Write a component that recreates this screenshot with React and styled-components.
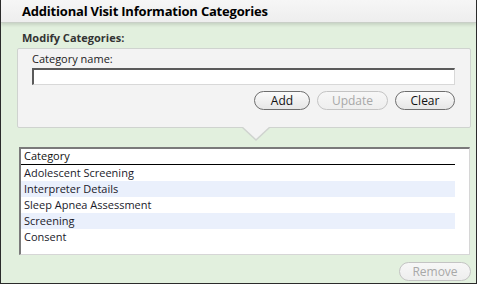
import React from "react";
import styled, { createGlobalStyle } from "styled-components";

const GlobalStyle = createGlobalStyle`
  html, body {
    margin: 0;
    padding: 0;
    background: #ffffff;
  }
  body {
    font-family: "Open Sans", "Noto Sans", Arial, sans-serif;
    color: #111;
  }
`;

const Window = styled.div`
  width: 477px;
  height: 284px;
  box-sizing: border-box;
  border-left: 1px solid #2b2b2b;
  border-right: 1px solid #2b2b2b;
  border-bottom: 1px solid #2b2b2b;
  background: #e2f0de;
  display: flex;
  flex-direction: column;
  overflow: hidden;
`;

const TitleBar = styled.div`
  height: 22px;
  flex: none;
  background: linear-gradient(#f6f6f6, #eeeeee);
  border-bottom: 1px solid #c9cfc7;
  box-shadow: 0 2px 3px rgba(0, 0, 0, 0.12);
  padding-left: 21px;
  display: flex;
  align-items: center;
  font-size: 13px;
  font-weight: 700;
  letter-spacing: -0.2px;
  color: #000;
`;

const Body = styled.div`
  flex: 1;
  display: flex;
  flex-direction: column;
  padding: 7px 5px 0 16px;
`;

const SectionLabel = styled.div`
  font-size: 11px;
  font-weight: 700;
  color: #333;
  padding-left: 5px;
  height: 16px;
  line-height: 16px;
`;

const EditPanel = styled.div`
  position: relative;
  margin-top: 2px;
  height: 80px;
  box-sizing: border-box;
  background: #f3f3f3;
  border: 1px solid #cfd3cf;
  border-radius: 2px;
  padding: 2px 15px 0 14px;
  display: flex;
  flex-direction: column;
`;

const Pointer = styled.div`
  position: absolute;
  left: 223px;
  bottom: -14px;
  width: 0;
  height: 0;
  border-left: 15px solid transparent;
  border-right: 15px solid transparent;
  border-top: 14px solid #cfd3cf;

  &::after {
    content: "";
    position: absolute;
    left: -14px;
    top: -15px;
    border-left: 14px solid transparent;
    border-right: 14px solid transparent;
    border-top: 13px solid #f3f3f3;
  }
`;

const FieldLabel = styled.div`
  font-size: 11px;
  color: #222;
  height: 16px;
  line-height: 16px;
`;

const TextInput = styled.input`
  margin-top: 1px;
  height: 17px;
  box-sizing: border-box;
  border: 1px solid #d8d8d8;
  border-top: 2px solid #5a5a5a;
  border-left: 2px solid #5a5a5a;
  background: #fff;
  outline: none;
  padding: 0 3px;
  font-family: inherit;
  font-size: 11px;
`;

const ButtonRow = styled.div`
  display: flex;
  justify-content: flex-end;
  gap: 7px;
  margin-top: 6px;
`;

const PillButton = styled.button`
  width: ${(p) => p.$w}px;
  height: 19px;
  box-sizing: border-box;
  border-radius: 10px;
  border: 1px solid ${(p) => (p.disabled ? "#c4c4c4" : "#6e6e6e")};
  background: ${(p) =>
    p.disabled
      ? "linear-gradient(#f7f7f7, #eeeeee)"
      : "linear-gradient(#fbfbfb, #e6e6e6)"};
  color: ${(p) => (p.disabled ? "#a8a8a8" : "#111")};
  font-family: inherit;
  font-size: 12px;
  line-height: 16px;
  padding: 0;
  cursor: default;
`;

const ListBox = styled.div`
  margin-top: 19px;
  margin-left: 2px;
  margin-right: 1px;
  height: 108px;
  box-sizing: border-box;
  background: #fff;
  border: 1px solid #d6d6d6;
  border-top: 2px solid #7a7a7a;
  border-left: 2px solid #7a7a7a;
  padding-right: 14px;
`;

const HeaderCell = styled.div`
  height: 15px;
  line-height: 14px;
  padding-left: 3px;
  border-bottom: 1px solid #000;
  font-size: 11px;
  color: #111;
`;

const Row = styled.div`
  height: 16px;
  line-height: 16px;
  padding-left: 3px;
  font-size: 11px;
  color: #1a1a2a;
  background: ${(p) => (p.$alt ? "#eaf0fc" : "#fff")};
`;

const Footer = styled.div`
  display: flex;
  justify-content: flex-end;
  margin-top: 7px;
`;

const categories = [
  "Adolescent Screening",
  "Interpreter Details",
  "Sleep Apnea Assessment",
  "Screening",
  "Consent",
];

export default function App() {
  return (
    <>
      <GlobalStyle />
      <Window>
        <TitleBar>Additional Visit Information Categories</TitleBar>
        <Body>
          <SectionLabel>Modify Categories:</SectionLabel>
          <EditPanel>
            <FieldLabel>Category name:</FieldLabel>
            <TextInput type="text" />
            <ButtonRow>
              <PillButton $w={56}>Add</PillButton>
              <PillButton $w={71} disabled>
                Update
              </PillButton>
              <PillButton $w={60}>Clear</PillButton>
            </ButtonRow>
            <Pointer />
          </EditPanel>
          <ListBox>
            <HeaderCell>Category</HeaderCell>
            {categories.map((c, i) => (
              <Row key={c} $alt={i % 2 === 1}>
                {c}
              </Row>
            ))}
          </ListBox>
          <Footer>
            <PillButton $w={72} disabled>
              Remove
            </PillButton>
          </Footer>
        </Body>
      </Window>
    </>
  );
}
